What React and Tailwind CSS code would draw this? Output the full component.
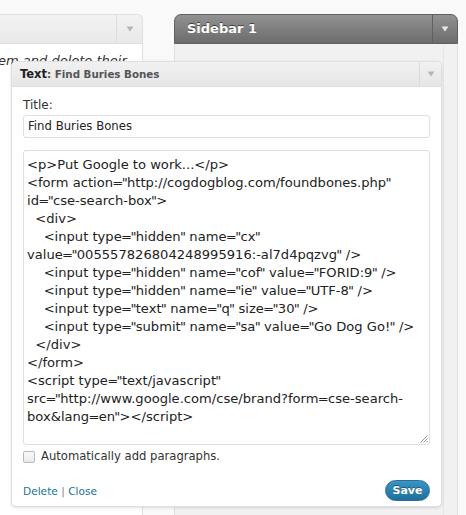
import React from "react";

const lines = [
  "<p>Put Google to work...</p>",
  '<form action="http://cogdogblog.com/foundbones.php"',
  'id="cse-search-box">',
  "  <div>",
  '    <input type="hidden" name="cx"',
  'value="005557826804248995916:-al7d4pqzvg" />',
  '    <input type="hidden" name="cof" value="FORID:9" />',
  '    <input type="hidden" name="ie" value="UTF-8" />',
  '    <input type="text" name="q" size="30" />',
  '    <input type="submit" name="sa" value="Go Dog Go!" />',
  "  </div>",
  "</form>",
  '<script type="text/javascript"',
  'src="http://www.google.com/cse/brand?form=cse-search-',
  'box&lang=en"></script>',
];

function CodeLine({ text }) {
  const parts = text.split(/(["=])/);
  return (
    <div className="whitespace-pre">
      {parts.map((p, i) =>
        p === '"' ? (
          <span key={i} className="mx-[-0.75px]">"</span>
        ) : p === "=" ? (
          <span key={i} className="mx-[-0.75px]">=</span>
        ) : (
          <React.Fragment key={i}>{p}</React.Fragment>
        )
      )}
    </div>
  );
}

function Arrow({ color = "#9a9a9a" }) {
  return (
    <svg width="8" height="6" viewBox="0 0 8 6">
      <path d="M0.5 0.5 L7.5 0.5 L4 5.5 Z" fill={color} />
    </svg>
  );
}

export default function App() {
  return (
    <div
      className="relative w-[466px] h-[515px] overflow-hidden bg-[#f9f9f9] text-[#333]"
      style={{ fontFamily: '"DejaVu Sans", "Open Sans", sans-serif' }}
    >
      <div className="flex h-full pt-[14px]">
        {/* Left panel */}
        <div className="flex flex-col w-[143px] h-full">
          <div className="flex h-[30px] justify-end border border-l-0 border-[#dfdfdf] rounded-tr-[6px] bg-gradient-to-b from-[#f2f2f2] to-[#e9e9e9]">
            <div className="flex w-[26px] items-center justify-center border-l border-[#dcdcdc]">
              <Arrow color="#b5b5b5" />
            </div>
          </div>
          <div className="flex-1 bg-white border-r border-[#dfdfdf] pt-[8px]">
            <div className="italic text-[13px] leading-[18px] text-[#333] whitespace-nowrap -ml-[2px]">
              em and delete their
            </div>
          </div>
        </div>

        {/* Right panel */}
        <div className="ml-[31px] flex flex-col w-[284px] h-full">
          <div className="flex h-[30px] items-center justify-between rounded-t-[7px] border border-[#5f5f5f] bg-gradient-to-b from-[#929292] to-[#6c6c6c]">
            <span className="pl-[12px] text-[13px] font-bold text-white [text-shadow:0_-1px_0_#3f3f3f]">
              Sidebar 1
            </span>
            <div className="flex w-[25px] h-full items-center justify-center border-l border-[#606060]">
              <Arrow color="#e8e8e8" />
            </div>
          </div>
          <div className="flex-1 bg-[#f1f1f1] border-x border-[#dfdfdf] flex justify-end">
            <div className="w-[14px] h-full border-l border-[#e6e6e6]" />
          </div>
        </div>
      </div>

      {/* Floating widget */}
      <div className="absolute left-[11px] top-[61px] w-[431px] h-[446px] flex flex-col bg-white border border-[#dfdfdf] rounded-[5px] shadow-[0_1px_3px_rgba(0,0,0,0.12)]">
        <div className="flex h-[25px] items-center justify-between rounded-t-[5px] border-b border-[#dfdfdf] bg-gradient-to-b from-[#f1f1f1] to-[#e6e6e6]">
          <div className="pl-[8px] pt-[1px] text-[11.5px] font-bold text-[#222] whitespace-nowrap">
            Text<span className="text-[10.3px] text-[#555]">: Find Buries Bones</span>
          </div>
          <div className="flex w-[22px] h-full items-center justify-center border-l border-[#dadada]">
            <Arrow color="#b5b5b5" />
          </div>
        </div>

        <div className="flex flex-col px-[11px] pt-[10px]">
          <div className="text-[12px] leading-[16px] text-[#333]">Title:</div>
          <div className="mt-[2px] h-[23px] flex items-center rounded-[3px] border border-[#dfdfdf] bg-white px-[4px] text-[11.7px] text-[#222]">
            Find Buries Bones
          </div>
          <div className="relative mt-[12px] h-[295px] rounded-[3px] border border-[#dfdfdf] bg-white pl-[3px] pt-[5px] text-[13.1px] leading-[18px] text-[#222]">
            {lines.map((l, i) => (
              <CodeLine key={i} text={l} />
            ))}
            <svg className="absolute right-[1px] bottom-[1px]" width="9" height="9" viewBox="0 0 9 9">
              <path d="M8.5 1.5 L1.5 8.5 M8.5 4.5 L4.5 8.5 M8.5 7 L7 8.5" stroke="#8a8a8a" strokeWidth="0.9" />
            </svg>
          </div>
          <div className="mt-[3px] flex items-center gap-[6px]">
            <div className="w-[12px] h-[12px] rounded-[2px] border border-[#b8b8b8] bg-gradient-to-b from-[#fafafa] to-[#e9e9e9]" />
            <span className="text-[11.6px] text-[#333]">Automatically add paragraphs.</span>
          </div>
          <div className="mt-[15px] flex items-center justify-between">
            <div className="text-[10.6px] text-[#21759b] pt-[3px]">
              Delete <span className="text-[#888]">|</span> Close
            </div>
            <div className="flex h-[21px] w-[45px] items-center justify-center rounded-full border border-[#2a6f94] bg-gradient-to-b from-[#3b94c4] to-[#1f6f9d] text-[11px] font-bold text-white [text-shadow:0_-1px_0_#1d5a7d]">
              Save
            </div>
          </div>
        </div>
      </div>
    </div>
  );
}
